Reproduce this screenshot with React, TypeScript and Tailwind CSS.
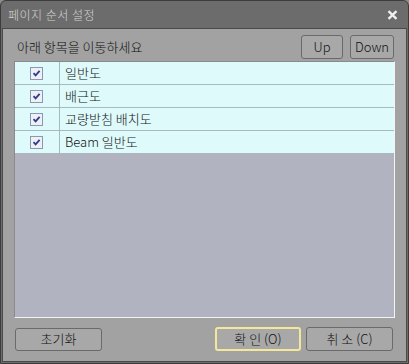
import React, { useState } from 'react';

const FONT = '"Noto Sans CJK KR", "DejaVu Sans", sans-serif';

interface PageItem {
    id: number;
    name: string;
    checked: boolean;
}

const initialItems: PageItem[] = [
    { id: 1, name: '일반도', checked: true },
    { id: 2, name: '배근도', checked: true },
    { id: 3, name: '교량받침 배치도', checked: true },
    { id: 4, name: 'Beam 일반도', checked: true },
];

const CheckBox: React.FC<{ checked: boolean; onClick: () => void }> = ({ checked, onClick }) => (
    <div
        onClick={onClick}
        className="w-[13px] h-[13px] border border-[#8c97b0] bg-[#eef0f6] flex items-center justify-center"
    >
        {checked && (
            <svg width="9" height="9" viewBox="0 0 9 9">
                <path d="M1.5 4.2 L3.6 6.4 L7.6 1.8" stroke="#2c3f8a" strokeWidth="1.8" fill="none" />
            </svg>
        )}
    </div>
);

const App: React.FC = () => {
    const [items, setItems] = useState<PageItem[]>(initialItems);

    const toggle = (id: number) => {
        setItems(items.map((it) => (it.id === id ? { ...it, checked: !it.checked } : it)));
    };

    return (
        <div className="w-[409px] h-[364px] bg-[#8a8a8a] font-light" style={{ fontFamily: FONT }}>
            <div className="w-full h-full flex flex-col rounded-t-[6px] border border-[#3c3c3c] bg-[#6c6c6c] overflow-hidden">
                {/* title bar */}
                <div className="h-[27px] flex items-center justify-between pl-[7px] pr-[10px]">
                    <span className="text-[12px] text-[#d4d4d4] tracking-[0.5px]">페이지 순서 설정</span>
                    <svg width="11" height="10" viewBox="0 0 11 10">
                        <path d="M1.5 1.2 L9.5 8.8 M9.5 1.2 L1.5 8.8" stroke="#efefef" strokeWidth="2.4" />
                    </svg>
                </div>

                <div className="flex-1 mx-[1px] mb-[1px] border border-[#4a4a4a] bg-[#a2a2a2] flex flex-col px-[11px]">
                    {/* header row */}
                    <div className="h-[33px] flex items-center justify-between pt-[2px]">
                        <span className="pl-[3px] text-[13px] text-[#111]">아래 항목을 이동하세요</span>
                        <div className="flex gap-[7px] pr-[1px]">
                            <button className="w-[42px] h-[24px] rounded-[3px] border border-[#6a6a6a] bg-[#a8a8a8] text-[13px] text-[#111]">
                                Up
                            </button>
                            <button className="w-[44px] h-[24px] rounded-[3px] border border-[#6a6a6a] bg-[#a8a8a8] text-[13px] text-[#111]">
                                Down
                            </button>
                        </div>
                    </div>

                    {/* list */}
                    <div className="h-[257px] mt-[-1px] border border-[#f4f4f4] border-l-[#8a8a8a] border-t-[#8a8a8a] bg-[#b1b4c0] flex flex-col">
                        {items.map((it) => (
                            <div key={it.id} className="h-[23px] flex bg-[#defafa] border-b border-[#a8b8bc]">
                                <div className="w-[45px] flex items-center pl-[15px] border-r border-[#a8b8bc]">
                                    <CheckBox checked={it.checked} onClick={() => toggle(it.id)} />
                                </div>
                                <div className="flex items-center pl-[5px] text-[13px] text-[#111]">{it.name}</div>
                            </div>
                        ))}
                    </div>

                    {/* bottom buttons */}
                    <div className="flex-1 flex items-center justify-between pb-[1px]">
                        <button className="ml-[1px] w-[87px] h-[23px] rounded-[3px] border border-[#6a6a6a] bg-[#a8a8a8] text-[13px] text-[#111]">
                            초기화
                        </button>
                        <div className="flex gap-[5px] mr-[2px]">
                            <button className="w-[86px] h-[24px] rounded-[3px] border-2 border-[#f2e79a] bg-[#a8a8a8] text-[13px] text-[#111]">
                                확 인 (O)
                            </button>
                            <button className="w-[87px] h-[24px] rounded-[3px] border border-[#6a6a6a] bg-[#a8a8a8] text-[13px] text-[#111]">
                                취 소 (C)
                            </button>
                        </div>
                    </div>
                </div>
            </div>
        </div>
    );
};

export default App;
